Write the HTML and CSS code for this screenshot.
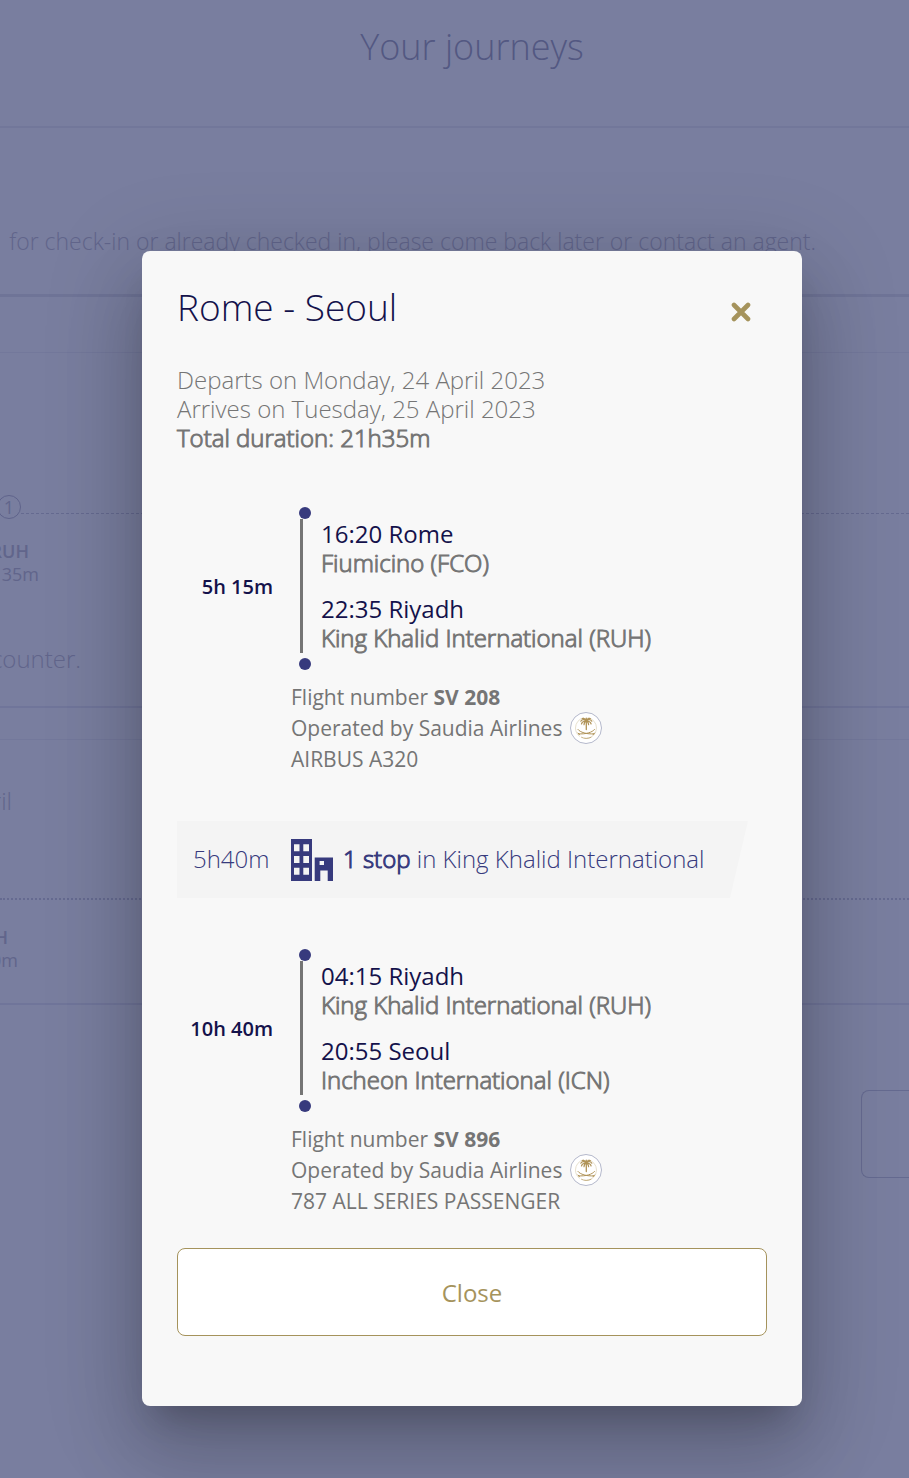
FILE: index.html
```html
<!DOCTYPE html>
<html lang="en">
<head>
<meta charset="utf-8">
<meta name="viewport" content="width=device-width, initial-scale=1">
<title>Your journeys</title>
<link rel="stylesheet" href="styles.css">
</head>
<body>
<svg class="sprite" aria-hidden="true">
  <symbol id="emblem" viewBox="0 0 32 32">
    <circle cx="16" cy="16" r="15.5" fill="#fff" stroke="#b4b8cb"/>
    <circle cx="16" cy="16" r="10.5" fill="none" stroke="#ddd2b8" stroke-width=".7" stroke-dasharray="18 5 24 4"/>
    <g fill="none" stroke="#b09357" stroke-linecap="round">
      <path d="M16.300 9v8.500" stroke-width="1.300"/>
      <path d="M16.300 9.500C14.500 7 12 7 10.800 9.200M16.300 9.500c1.800-2.500 4.300-2.500 5.500-.3M16.300 9.500c-2.600-.6-4.300.3-4.800 2.500M16.300 9.500c2.600-.6 4.300.3 4.800 2.500M16.300 9.500c-1.300.3-2.200 1.300-2.300 3.200M16.300 9.500c1.300.3 2.200 1.300 2.300 3.200M16.300 9c-.8-2.200-2.400-3-4-2.500M16.300 9c.8-2.200 2.400-3 4-2.500M16.300 9V6" stroke-width="1.200"/>
      <path d="M8 17.500c2 2.800 9 5 16 4.300M24.500 17.500c-2 2.800-9 5-16 4.300M8 21l1.500 1.800M24.500 21L23 22.800" stroke-width="1"/>
      <path d="M11.500 25.300c3 1.500 6.500 1.500 9.500 0" stroke-width=".7"/>
    </g>
  </symbol>
</svg>

<main class="page">
  <h1 class="page-title">Your journeys</h1>
  <section class="notice"><p class="clip notice-text">for check-in or already checked in, please come back later or contact an agent.</p></section>
  <section class="card-head"></section>
  <section class="trip trip-first">
    <div class="route"><span class="stops">1</span><span class="dots"></span></div>
    <p class="clip code code-first">RUH</p>
    <p class="clip wait wait-first">35m</p>
    <p class="clip counter">counter.</p>
  </section>
  <div class="divider"></div>
  <section class="trip trip-second">
    <p class="clip date">April</p>
    <div class="route route-plain"><span class="dots"></span></div>
    <p class="clip code code-second">RUH</p>
    <p class="clip wait wait-second">40m</p>
  </section>
  <div class="actions"><button class="ghost" type="button" aria-label="Continue"></button></div>
</main>

<div class="overlay">
  <div class="modal" role="dialog" aria-modal="true" aria-labelledby="modal-title">
    <header class="modal-head">
      <h2 class="modal-title" id="modal-title">Rome - Seoul</h2>
      <button class="dismiss" type="button" aria-label="Close dialog">
        <svg class="dismiss-icon" viewBox="0 0 20 20"><path d="M3 3l14 14M17 3L3 17" fill="none" stroke="#a5935c" stroke-width="4.600" stroke-linecap="round"/></svg>
      </button>
    </header>
    <p class="summary">Departs on Monday, 24 April 2023<br>Arrives on Tuesday, 25 April 2023<br><span class="strong">Total duration: 21h35m</span></p>

    <section class="segment">
      <div class="leg">
        <div class="leg-time">5h 15m</div>
        <div class="rail"><i class="dot"></i><i class="line"></i><i class="dot"></i></div>
        <div class="places">
          <div><div class="city">16:20 Rome</div><div class="airport strong">Fiumicino (FCO)</div></div>
          <div><div class="city">22:35 Riyadh</div><div class="airport strong">King Khalid International (RUH)</div></div>
        </div>
      </div>
      <div class="details">
        <div>Flight number <b class="number">SV 208</b></div>
        <div class="operator">Operated by Saudia Airlines <svg class="emblem" role="img" aria-label="Saudia"><use href="#emblem"/></svg></div>
        <div>AIRBUS A320</div>
      </div>
    </section>

    <section class="stopover">
      <span class="stop-time">5h40m</span>
      <svg class="building" viewBox="0 0 42 42" aria-hidden="true"><path fill="#373a7d" fill-rule="evenodd" d="M0 0h21v42H0zM3 5.300v7h5.500v-7zM12.300 5.300v7H18v-7zM3 17v7h5.500v-7zM12.300 17v7H18v-7zM3 28.700v7h5.500v-7zM12.300 28.700v7H18v-7zM23.700 18.500H42V42h-5.300V31.500h-7.400V42h-5.600zM28.600 22v4H33v-4z"/></svg>
      <span class="stop-text"><span class="strong">1 stop</span> in King Khalid International</span>
    </section>

    <section class="segment">
      <div class="leg">
        <div class="leg-time">10h 40m</div>
        <div class="rail"><i class="dot"></i><i class="line"></i><i class="dot"></i></div>
        <div class="places">
          <div><div class="city">04:15 Riyadh</div><div class="airport strong">King Khalid International (RUH)</div></div>
          <div><div class="city">20:55 Seoul</div><div class="airport strong">Incheon International (ICN)</div></div>
        </div>
      </div>
      <div class="details">
        <div>Flight number <b class="number">SV 896</b></div>
        <div class="operator">Operated by Saudia Airlines <svg class="emblem" role="img" aria-label="Saudia"><use href="#emblem"/></svg></div>
        <div>787 ALL SERIES PASSENGER</div>
      </div>
    </section>

    <button class="close" type="button">Close</button>
  </div>
</div>
</body>
</html>
```
FILE: styles.css
```css
* { box-sizing: border-box; }
body {
  margin: 0;
  position: relative;
  min-height: 100vh;
  overflow-x: hidden;
  background: #797e9f;
  font-family: "Open Sans", "Noto Sans", sans-serif;
  font-weight: 320;
  font-size: 24px;
  line-height: 29px;
}
h1, h2, p { margin: 0; font-weight: inherit; }
button { font: inherit; cursor: pointer; }
.sprite { position: absolute; width: 0; height: 0; }

/* Page behind the dialog */
.page { color: #61658b; overflow: hidden; }
.page-title {
  height: 128px;
  padding: 23px 0 0 35px;
  border-bottom: 2px solid #72779a;
  color: #535882;
  font-size: 36px;
  line-height: 48px;
  text-align: center;
}
.clip { display: flex; justify-content: flex-end; white-space: nowrap; }
.notice { height: 169px; padding-top: 99px; border-bottom: 3px solid #6f7497; }
.notice-text { width: 816px; font-size: 23px; }
.card-head { height: 56px; border-bottom: 1px solid #73789b; }
.trip { border-bottom: 2px solid #70759a; }
.trip-first { height: 355px; padding-top: 142px; }
.route { display: flex; height: 26px; }
.stops {
  width: 24px;
  height: 24px;
  margin-left: -3px;
  border: 1px solid #5f638b;
  border-radius: 50%;
  font-size: 18px;
  font-weight: 400;
  line-height: 22px;
  text-align: center;
}
.dots { flex: 1; height: 19px; border-bottom: 2px dotted #656a90; }
.stops + .dots { border-bottom: 1px dashed #656a90; }
.code { font-size: 18px; line-height: 24px; font-weight: 600; }
.wait { font-size: 18px; line-height: 23px; font-weight: 400; }
.code-first { width: 29px; margin-top: 18px; }
.wait-first { width: 39px; }
.counter { width: 81px; margin-top: 58px; }
.divider { height: 32px; border-bottom: 1px solid #73789b; }
.trip-second { height: 265px; padding-top: 46px; }
.date { width: 12px; }
.route-plain { margin-top: 66px; }
.code-second { width: 8px; margin-top: 18px; }
.wait-second { width: 18px; }
.actions { display: flex; justify-content: flex-end; padding-top: 85px; }
.ghost {
  width: 48px;
  height: 88px;
  border: 1px solid #656a90;
  border-right: 0;
  border-radius: 8px 0 0 8px;
  background: transparent;
}

/* Dialog */
.overlay {
  position: absolute;
  inset: 0;
  display: flex;
  justify-content: center;
  align-items: flex-start;
  padding: 251px 0 72px 35px;
}
.modal {
  width: 100%;
  max-width: 660px;
  padding: 34px 35px 70px;
  border-radius: 8px;
  background: #f8f8f8;
  color: #757575;
  box-shadow: 0 22px 30px -14px rgba(0,0,0,.2), 0 48px 76px 6px rgba(0,0,0,.14), 0 18px 92px 16px rgba(0,0,0,.12);
}
.modal-head { display: flex; justify-content: space-between; align-items: center; padding-right: 16px; }
.modal-title { color: #14124b; font-size: 37px; line-height: 44px; }
.dismiss { padding: 10px 0 0; border: 0; background: none; }
.dismiss-icon { display: block; width: 20px; height: 20px; }
.summary { margin: 36px 0 55px; }
.strong { -webkit-text-stroke: 1px currentColor; }
.leg { display: flex; }
.leg-time {
  width: 96px;
  align-self: center;
  padding-bottom: 4px;
  color: #14124b;
  font-size: 20px;
  font-weight: 600;
  text-align: right;
}
.rail { display: flex; flex-direction: column; width: 12px; margin: 0 10px 0 26px; }
.dot { width: 12px; height: 12px; border-radius: 50%; background: #373a7d; }
.line { flex: 1; width: 3px; margin: 0 0 5px 1px; background: #757575; }
.places { display: flex; flex-direction: column; gap: 17px; padding: 12px 0 18px; }
.city { color: #14124b; font-weight: 400; }
.details { padding: 12px 0 0 114px; font-size: 21px; line-height: 30px; font-weight: 400; }
.operator { display: flex; align-items: center; gap: 8px; }
.emblem { width: 32px; height: 32px; }
.number { font-weight: 700; }
.stopover {
  display: flex;
  align-items: center;
  height: 77px;
  margin: 47px 19px 51px 0;
  padding-left: 16px;
  background: #f4f4f4;
  clip-path: polygon(0 0, 100% 0, calc(100% - 18px) 100%, 0 100%);
  color: #373a7d;
  white-space: nowrap;
}
.stop-time { width: 98px; }
.stop-time, .stop-text { padding-bottom: 3px; }
.building { width: 42px; height: 42px; margin-right: 10px; }
.close {
  display: block;
  width: 100%;
  height: 88px;
  margin-top: 32px;
  border: 1px solid #a5935c;
  border-radius: 8px;
  background: #fff;
  color: #a5935c;
  font-weight: 400;
}
```
